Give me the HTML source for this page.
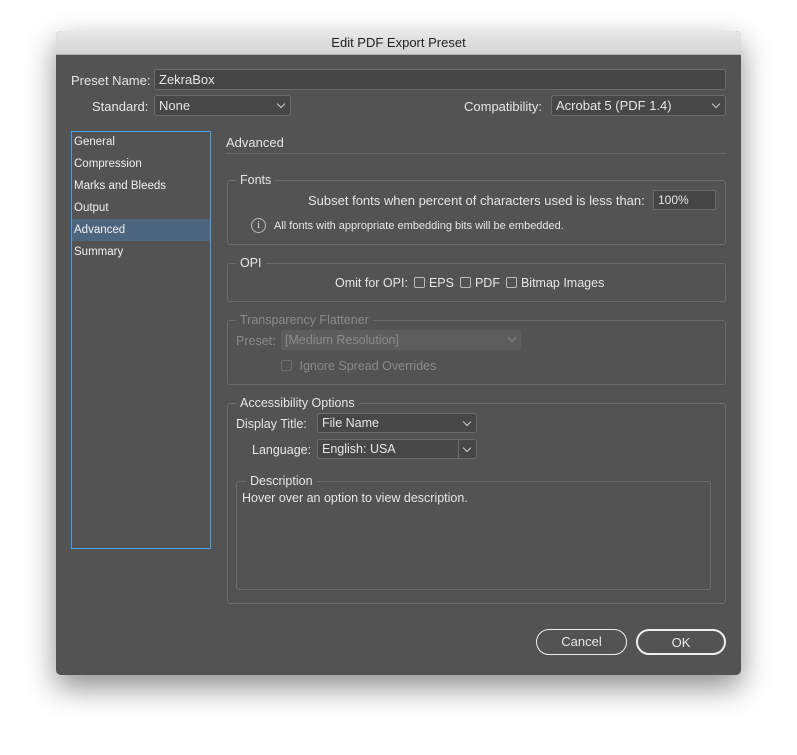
<!DOCTYPE html>
<html><head><style>
*{margin:0;padding:0;box-sizing:border-box}
body{width:797px;height:755px;background:#fff;font-family:"Liberation Sans",sans-serif;font-size:12px;color:#e6e6e6;position:relative;overflow:hidden}
.dlg{position:absolute;left:56px;top:31px;width:685px;height:644px;background:#535353;border-radius:5px;box-shadow:0 12px 30px rgba(0,0,0,.45);overflow:hidden}
.tb{position:absolute;left:0;top:0;width:100%;height:24px;background:linear-gradient(#e8e8e8,#d3d3d3);border-bottom:1px solid #b0b0b0;color:#222;font-size:13px;text-align:center;line-height:24px}
.a{position:absolute;white-space:nowrap}
.in{position:absolute;background:#454545;border:1px solid #6b6b6b;border-radius:2px;padding-left:4px;line-height:18px}
.sel{position:absolute;background:#474747;border:1px solid #6b6b6b;border-radius:3px;padding-left:4px;line-height:19px}
.chev{position:absolute;right:6px;top:5px;width:6px;height:6px;border-right:1px solid #ccc;border-bottom:1px solid #ccc;transform:rotate(45deg)}
.grp{position:absolute;border:1px solid #6a6a6a;border-radius:3px}
.gl{position:absolute;background:#535353;padding:0 4px;font-size:12.5px;line-height:14px}
.cb{display:inline-block;width:11px;height:11px;border:1px solid #bbb;border-radius:2px;vertical-align:-1px;margin:0 4px 0 6px}
.btn{position:absolute;border:1.5px solid #eee;border-radius:13px;text-align:center;line-height:23px;font-size:13px}
.dim{color:#8a8a8a}
.sb{font-size:11.5px;color:#f0f0f0}
</style></head><body>
<div class="dlg">
<div class="tb">Edit PDF Export Preset</div>
<div class="a" style="left:15px;top:42px;font-size:13px">Preset Name:</div>
<div class="in" style="left:98px;top:38px;width:572px;height:21px;font-size:13px;line-height:19px">ZekraBox</div>
<div class="a" style="left:36px;top:68px;font-size:13px">Standard:</div>
<div class="sel" style="left:98px;top:64px;width:137px;height:21px;font-size:13px;line-height:20px">None<div class="chev"></div></div>
<div class="a" style="left:408px;top:68px;font-size:13px">Compatibility:</div>
<div class="sel" style="left:495px;top:64px;width:175px;height:21px;font-size:13px;line-height:20px">Acrobat 5 (PDF 1.4)<div class="chev"></div></div>

<div style="position:absolute;left:15px;top:100px;width:140px;height:418px;border:1px solid #4aa0e8;background:#535353"></div>
<div style="position:absolute;left:16px;top:188px;width:138px;height:22px;background:#4d6680"></div>
<div class="a sb" style="left:18px;top:105px">General</div>
<div class="a sb" style="left:18px;top:127px">Compression</div>
<div class="a sb" style="left:18px;top:149px">Marks and Bleeds</div>
<div class="a sb" style="left:18px;top:171px">Output</div>
<div class="a sb" style="left:18px;top:193px">Advanced</div>
<div class="a sb" style="left:18px;top:215px">Summary</div>

<div class="a" style="left:170px;top:104px;font-size:13px">Advanced</div>
<div style="position:absolute;left:170px;top:122px;width:500px;border-top:1px solid #666"></div>

<div class="grp" style="left:171px;top:149px;width:499px;height:65px"></div>
<div class="gl" style="left:180px;top:142px">Fonts</div>
<div class="a" style="left:252px;top:162px;font-size:13px">Subset fonts when percent of characters used is less than:</div>
<div class="in" style="left:597px;top:159px;width:63px;height:20px">100%</div>
<div class="a" style="left:195px;top:187px;width:15px;height:15px;border:1px solid #bbb;border-radius:50%;font-size:10px;text-align:center;line-height:13px;font-family:'Liberation Serif',serif">i</div>
<div class="a" style="left:218px;top:189px;font-size:11px">All fonts with appropriate embedding bits will be embedded.</div>

<div class="grp" style="left:171px;top:232px;width:499px;height:39px"></div>
<div class="gl" style="left:180px;top:225px">OPI</div>
<div class="a" style="left:279px;top:245px;font-size:12.5px">Omit for OPI:<span class="cb"></span>EPS<span class="cb"></span>PDF<span class="cb"></span>Bitmap Images</div>

<div class="grp" style="left:171px;top:289px;width:499px;height:65px"></div>
<div class="gl dim" style="left:180px;top:282px">Transparency Flattener</div>
<div class="a dim" style="left:180px;top:303px;font-size:12.5px">Preset:</div>
<div style="position:absolute;left:225px;top:299px;width:240px;height:20px;background:#5d5d5d;border-radius:2px;color:#8a8a8a;padding-left:4px;line-height:20px;font-size:12.5px">[Medium Resolution]<div class="chev" style="border-color:#888"></div></div>
<div class="a dim" style="left:225px;top:328px;font-size:12.5px"><span class="cb" style="border-color:#6e6e6e;margin-left:0"></span> Ignore Spread Overrides</div>

<div class="grp" style="left:171px;top:372px;width:499px;height:201px"></div>
<div class="gl" style="left:180px;top:365px">Accessibility Options</div>
<div class="a" style="left:180px;top:386px;font-size:12.5px">Display Title:</div>
<div class="sel" style="left:261px;top:382px;width:160px;height:20px;font-size:12.5px">File Name<div class="chev"></div></div>
<div class="a" style="left:196px;top:412px;font-size:12.5px">Language:</div>
<div class="sel" style="left:261px;top:408px;width:160px;height:20px;font-size:12.5px">English: USA<div style="position:absolute;left:140px;top:0;height:18px;border-left:1px solid #6b6b6b"></div><div class="chev"></div></div>

<div class="grp" style="left:180px;top:450px;width:475px;height:109px"></div>
<div class="gl" style="left:190px;top:443px">Description</div>
<div class="a" style="left:186px;top:460px;font-size:12.5px">Hover over an option to view description.</div>

<div class="btn" style="left:480px;top:598px;width:91px;height:26px">Cancel</div>
<div class="btn" style="left:580px;top:598px;width:90px;height:26px;border-width:2px">OK</div>
</div>
</body></html>
